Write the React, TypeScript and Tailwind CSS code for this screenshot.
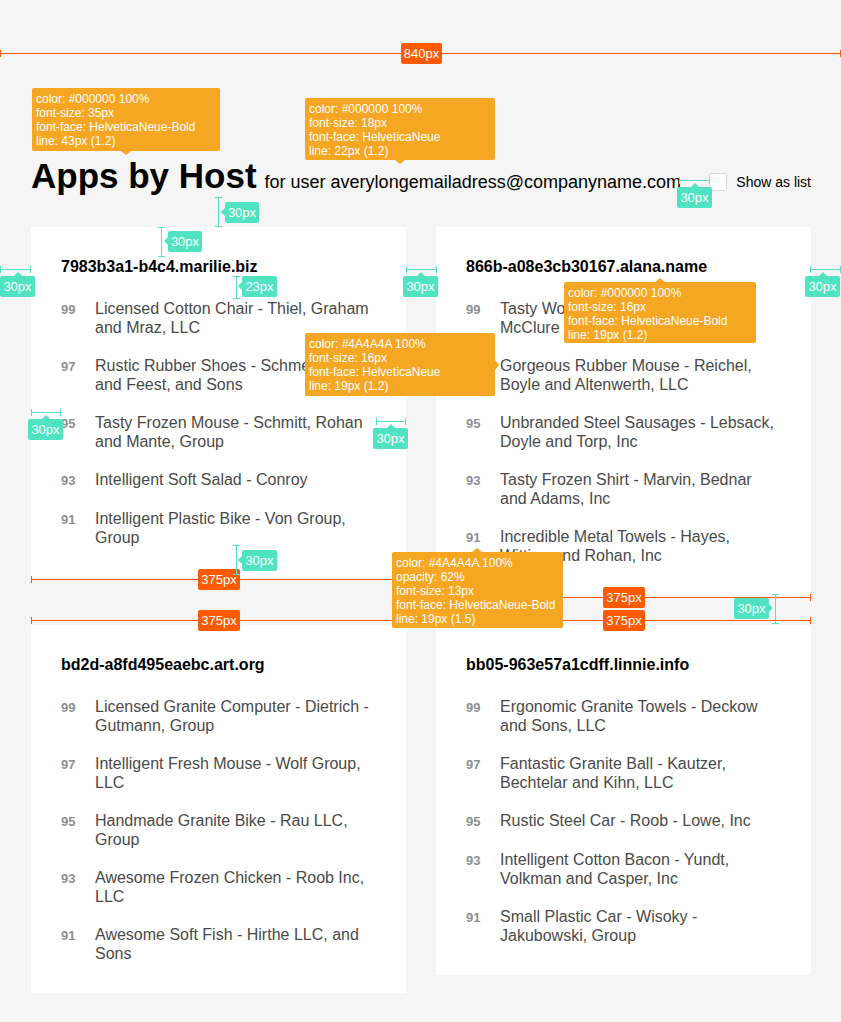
import type { ReactNode } from "react"

type App = { score: number; lines: string[] }
type Host = { name: string; apps: App[] }

const hosts: Host[] = [
  {
    name: "7983b3a1-b4c4.marilie.biz",
    apps: [
      { score: 99, lines: ["Licensed Cotton Chair - Thiel, Graham", "and Mraz, LLC"] },
      { score: 97, lines: ["Rustic Rubber Shoes - Schmeler", "and Feest, and Sons"] },
      { score: 95, lines: ["Tasty Frozen Mouse - Schmitt, Rohan", "and Mante, Group"] },
      { score: 93, lines: ["Intelligent Soft Salad - Conroy"] },
      { score: 91, lines: ["Intelligent Plastic Bike - Von Group,", "Group"] },
    ],
  },
  {
    name: "866b-a08e3cb30167.alana.name",
    apps: [
      { score: 99, lines: ["Tasty Wooden Chair - Kuhn, Lind", "McClure and Sons"] },
      { score: 97, lines: ["Gorgeous Rubber Mouse - Reichel,", "Boyle and Altenwerth, LLC"] },
      { score: 95, lines: ["Unbranded Steel Sausages - Lebsack,", "Doyle and Torp, Inc"] },
      { score: 93, lines: ["Tasty Frozen Shirt - Marvin, Bednar", "and Adams, Inc"] },
      { score: 91, lines: ["Incredible Metal Towels - Hayes,", "Witting and Rohan, Inc"] },
    ],
  },
  {
    name: "bd2d-a8fd495eaebc.art.org",
    apps: [
      { score: 99, lines: ["Licensed Granite Computer - Dietrich -", "Gutmann, Group"] },
      { score: 97, lines: ["Intelligent Fresh Mouse - Wolf Group,", "LLC"] },
      { score: 95, lines: ["Handmade Granite Bike - Rau LLC,", "Group"] },
      { score: 93, lines: ["Awesome Frozen Chicken - Roob Inc,", "LLC"] },
      { score: 91, lines: ["Awesome Soft Fish - Hirthe LLC, and", "Sons"] },
    ],
  },
  {
    name: "bb05-963e57a1cdff.linnie.info",
    apps: [
      { score: 99, lines: ["Ergonomic Granite Towels - Deckow", "and Sons, LLC"] },
      { score: 97, lines: ["Fantastic Granite Ball - Kautzer,", "Bechtelar and Kihn, LLC"] },
      { score: 95, lines: ["Rustic Steel Car - Roob - Lowe, Inc"] },
      { score: 93, lines: ["Intelligent Cotton Bacon - Yundt,", "Volkman and Casper, Inc"] },
      { score: 91, lines: ["Small Plastic Car - Wisoky -", "Jakubowski, Group"] },
    ],
  },
]

function HostCard({ host }: { host: Host }) {
  return (
    <div className="w-[375px] bg-white p-[30px]">
      <h2 className="text-[16px] font-bold leading-[19px] text-black">{host.name}</h2>
      <ul className="mt-[23px] flex flex-col gap-[19px]">
        {host.apps.map((app) => (
          <li key={app.score} className="flex items-baseline">
            <span className="w-[34px] shrink-0 text-[13px] font-bold leading-[19px] text-[#4a4a4a] opacity-[0.62]">
              {app.score}
            </span>
            <span className="text-[16px] leading-[19px] text-[#4a4a4a]">
              {app.lines.map((l) => (
                <span key={l} className="block whitespace-nowrap">
                  {l}
                </span>
              ))}
            </span>
          </li>
        ))}
      </ul>
    </div>
  )
}

// spec overlay pieces
function Tip({ className, lines, children }: { className: string; lines: string[]; children: ReactNode }) {
  return (
    <div className={`absolute rounded-[2px] bg-[#f5a623] px-[4px] pt-[4px] text-[12px] leading-[14px] text-white ${className}`}>
      {lines.map((l) => (
        <div key={l} className="whitespace-nowrap">
          {l}
        </div>
      ))}
      {children}
    </div>
  )
}

function Tag({ className, children }: { className: string; children: ReactNode }) {
  return (
    <div className={`absolute flex h-[21px] items-center justify-center rounded-[2px] text-[13px] text-white ${className}`}>
      {children}
    </div>
  )
}

const leftArrow = (
  <span className="absolute -left-[4px] top-[6px] border-y-[4px] border-r-[4px] border-y-transparent border-r-[#50e3c2]" />
)
const upArrow = (
  <span className="absolute -top-[4px] left-1/2 -translate-x-1/2 border-x-[4px] border-b-[4px] border-x-transparent border-b-[#50e3c2]" />
)
const rightArrow = (
  <span className="absolute -right-[4px] top-[6px] border-y-[4px] border-l-[4px] border-y-transparent border-l-[#50e3c2]" />
)

export default function App() {
  return (
    <div className="relative min-h-[1022px] w-full overflow-hidden bg-[#f5f5f5] font-['Liberation_Sans',Arial,sans-serif]">
      <div className="pl-[31px] pr-[30px] pt-[154px] pb-[31px]">
        <div className="flex items-start justify-between">
          <div className="flex items-baseline gap-[8px]">
            <h1 className="text-[35px] font-bold leading-[43px] text-black">Apps by Host</h1>
            <span className="text-[18px] leading-[22px] text-black">for user averylongemailadress@companyname.com</span>
          </div>
          <label className="mt-[19px] flex h-[18px] items-center gap-[9px]">
            <span className="h-[18px] w-[18px] rounded-[3px] border border-[#d9d9d9] bg-white" />
            <span className="text-[14px] leading-[17px] text-black">Show as list</span>
          </label>
        </div>

        <div className="mt-[30px] flex flex-wrap items-start gap-[30px]">
          {hosts.map((h) => (
            <HostCard key={h.name} host={h} />
          ))}
        </div>
      </div>

      {/* red width rulers */}
      <div className="absolute left-0 top-[50px] h-[7px] w-[841px] border-x border-[#ff5a00]">
        <div className="mt-[3px] h-px bg-[#ff5a00]" />
      </div>
      <Tag className="left-[401px] top-[43px] w-[41px] bg-[#ff5a00]">840px</Tag>

      <div className="absolute left-[31px] top-[576px] h-[7px] w-[375px] border-x border-[#ff5a00]">
        <div className="mt-[3px] h-px bg-[#ff5a00]" />
      </div>
      <Tag className="left-[198px] top-[569px] w-[42px] bg-[#ff5a00]">375px</Tag>

      <div className="absolute left-[436px] top-[594px] h-[7px] w-[375px] border-x border-[#ff5a00]">
        <div className="mt-[3px] h-px bg-[#ff5a00]" />
      </div>
      <Tag className="left-[603px] top-[587px] w-[42px] bg-[#ff5a00]">375px</Tag>

      <div className="absolute left-[31px] top-[617px] h-[7px] w-[375px] border-x border-[#ff5a00]">
        <div className="mt-[3px] h-px bg-[#ff5a00]" />
      </div>
      <Tag className="left-[198px] top-[610px] w-[42px] bg-[#ff5a00]">375px</Tag>

      <div className="absolute left-[436px] top-[617px] h-[7px] w-[375px] border-x border-[#ff5a00]">
        <div className="mt-[3px] h-px bg-[#ff5a00]" />
      </div>
      <Tag className="left-[603px] top-[610px] w-[42px] bg-[#ff5a00]">375px</Tag>

      {/* teal spacing measures */}
      <div className="absolute left-[215px] top-[197px] flex h-[30px] w-[7px] justify-center border-y border-[#50e3c2]">
        <div className="h-full w-px bg-[#50e3c2]" />
      </div>
      <Tag className="left-[225px] top-[202px] w-[34px] bg-[#50e3c2]">
        30px{leftArrow}
      </Tag>

      <div className="absolute left-[158px] top-[227px] flex h-[30px] w-[7px] justify-center border-y border-[#50e3c2]">
        <div className="h-full w-px bg-[#50e3c2]" />
      </div>
      <Tag className="left-[168px] top-[231px] w-[34px] bg-[#50e3c2]">
        30px{leftArrow}
      </Tag>

      <div className="absolute left-[679px] top-[177px] h-[7px] w-[31px] border-x border-[#50e3c2]">
        <div className="mt-[3px] h-px bg-[#50e3c2]" />
      </div>
      <Tag className="left-[677px] top-[187px] w-[35px] bg-[#50e3c2]">
        30px{upArrow}
      </Tag>

      <div className="absolute left-0 top-[266px] h-[7px] w-[31px] border-x border-[#50e3c2]">
        <div className="mt-[3px] h-px bg-[#50e3c2]" />
      </div>
      <Tag className="left-0 top-[276px] w-[35px] bg-[#50e3c2]">
        30px{upArrow}
      </Tag>

      <div className="absolute left-[406px] top-[266px] h-[7px] w-[31px] border-x border-[#50e3c2]">
        <div className="mt-[3px] h-px bg-[#50e3c2]" />
      </div>
      <Tag className="left-[403px] top-[276px] w-[35px] bg-[#50e3c2]">
        30px{upArrow}
      </Tag>

      <div className="absolute left-[810px] top-[266px] h-[7px] w-[31px] border-x border-[#50e3c2]">
        <div className="mt-[3px] h-px bg-[#50e3c2]" />
      </div>
      <Tag className="left-[805px] top-[276px] w-[35px] bg-[#50e3c2]">
        30px{upArrow}
      </Tag>

      <div className="absolute left-[233px] top-[276px] flex h-[23px] w-[7px] justify-center border-y border-[#50e3c2]">
        <div className="h-full w-px bg-[#50e3c2]" />
      </div>
      <Tag className="left-[242px] top-[276px] w-[35px] bg-[#50e3c2]">
        23px{leftArrow}
      </Tag>

      <div className="absolute left-[31px] top-[409px] h-[7px] w-[30px] border-x border-[#50e3c2]">
        <div className="mt-[3px] h-px bg-[#50e3c2]" />
      </div>
      <Tag className="left-[28px] top-[419px] w-[35px] bg-[#50e3c2]">
        30px{upArrow}
      </Tag>

      <div className="absolute left-[376px] top-[418px] h-[7px] w-[30px] border-x border-[#50e3c2]">
        <div className="mt-[3px] h-px bg-[#50e3c2]" />
      </div>
      <Tag className="left-[373px] top-[428px] w-[35px] bg-[#50e3c2]">
        30px{upArrow}
      </Tag>

      <div className="absolute left-[233px] top-[545px] flex h-[30px] w-[7px] justify-center border-y border-[#50e3c2]">
        <div className="h-full w-px bg-[#50e3c2]" />
      </div>
      <Tag className="left-[242px] top-[550px] w-[35px] bg-[#50e3c2]">
        30px{leftArrow}
      </Tag>

      <div className="absolute left-[772px] top-[594px] flex h-[30px] w-[7px] justify-center border-y border-[#50e3c2]">
        <div className="h-full w-px bg-[#50e3c2]" />
      </div>
      <Tag className="left-[734px] top-[598px] w-[35px] bg-[#50e3c2]">
        30px{rightArrow}
      </Tag>

      {/* typography callouts */}
      <Tip
        className="left-[32px] top-[88px] h-[63px] w-[188px]"
        lines={["color: #000000 100%", "font-size: 35px", "font-face: HelveticaNeue-Bold", "line: 43px (1.2)"]}
      >
        <span className="absolute -bottom-[4px] left-[89px] border-x-[5px] border-t-[4px] border-x-transparent border-t-[#f5a623]" />
      </Tip>

      <Tip
        className="left-[305px] top-[98px] h-[62px] w-[190px]"
        lines={["color: #000000 100%", "font-size: 18px", "font-face: HelveticaNeue", "line: 22px (1.2)"]}
      >
        <span className="absolute -bottom-[4px] left-[90px] border-x-[5px] border-t-[4px] border-x-transparent border-t-[#f5a623]" />
      </Tip>

      <Tip
        className="left-[564px] top-[282px] h-[61px] w-[192px]"
        lines={["color: #000000 100%", "font-size: 16px", "font-face: HelveticaNeue-Bold", "line: 19px (1.2)"]}
      >
        <span className="absolute -top-[4px] left-[91px] border-x-[5px] border-b-[4px] border-x-transparent border-b-[#f5a623]" />
      </Tip>

      <Tip
        className="left-[305px] top-[333px] h-[63px] w-[190px]"
        lines={["color: #4A4A4A 100%", "font-size: 16px", "font-face: HelveticaNeue", "line: 19px (1.2)"]}
      >
        <span className="absolute -right-[4px] top-[27px] border-y-[5px] border-l-[4px] border-y-transparent border-l-[#f5a623]" />
      </Tip>

      <Tip
        className="left-[392px] top-[552px] h-[76px] w-[171px]"
        lines={["color: #4A4A4A 100%", "opacity: 62%", "font-size: 13px", "font-face: HelveticaNeue-Bold", "line: 19px (1.5)"]}
      >
        <span className="absolute -top-[4px] left-[80px] border-x-[5px] border-b-[4px] border-x-transparent border-b-[#f5a623]" />
      </Tip>
    </div>
  )
}
